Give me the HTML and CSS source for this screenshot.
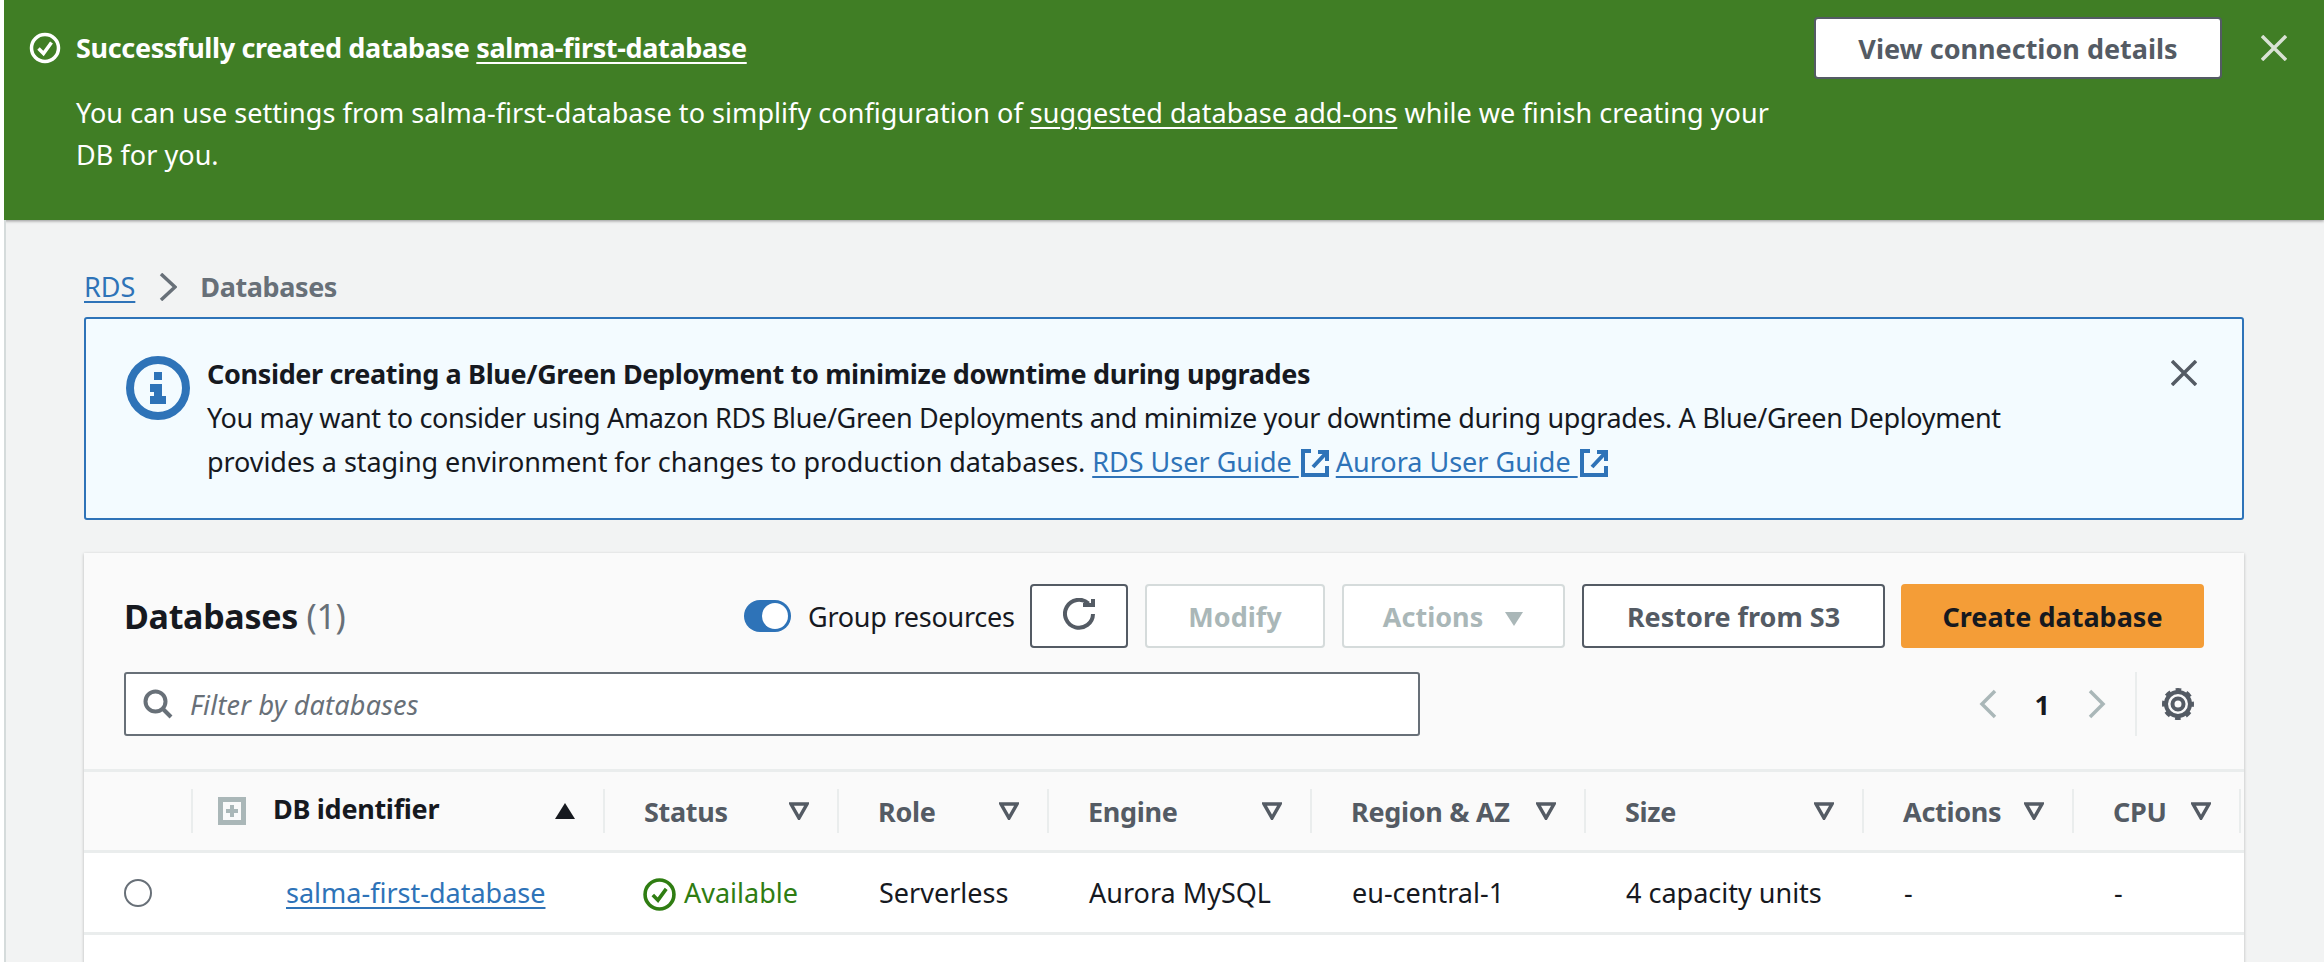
FILE: index.html
```html
<!DOCTYPE html>
<html lang="en">
  <head>
    <meta charset="UTF-8" />
    <meta name="viewport" content="width=device-width, initial-scale=1.0" />
    <title>RDS Databases</title>
    <link rel="stylesheet" href="styles.css">
  </head>
  <body>
    <div class="flash">
      <svg class="flash-icon" viewBox="0 0 32 32"><circle cx="16" cy="16" r="13.5"/><path d="M9.500 16.500l5 5 8-11"/></svg>
      <div class="flash-text">
        <div class="flash-title">Successfully created database <a href="#">salma-first-database</a></div>
        <p>You can use settings from salma-first-database to simplify configuration of <a href="#">suggested database add-ons</a> while we finish creating your DB for you.</p>
      </div>
      <button class="btn flash-btn">View connection details</button>
      <svg class="close close-light" viewBox="0 0 26 26"><path d="M1 1l24 24M25 1L1 25"/></svg>
    </div>

    <main class="content">
      <nav class="crumbs">
        <a href="#">RDS</a>
        <svg viewBox="0 0 18 28"><path d="M2 1l14 13L2 27"/></svg>
        <span>Databases</span>
      </nav>

      <div class="info">
        <svg class="info-icon" viewBox="0 0 64 64">
          <circle cx="32" cy="32" r="28" />
          <path class="info-i" d="M28 16h8v8h-8zM24 28h12v12h4v8H24v-8h4v-4h-4z"/>
        </svg>
        <div class="info-text">
          <strong>Consider creating a Blue/Green Deployment to minimize downtime during upgrades</strong>
          <p>You may want to consider using Amazon RDS Blue/Green Deployments and minimize your downtime during upgrades. A Blue/Green Deployment
            <span class="info-tail">provides a staging environment for changes to production databases.
            <a href="#">RDS User Guide <svg class="ext" viewBox="0 0 28 28"><path d="M10 2H2v24h24v-9M17 3h9v9M26 3L12 18"/></svg></a>
            <a href="#">Aurora User Guide <svg class="ext" viewBox="0 0 28 28"><path d="M10 2H2v24h24v-9M17 3h9v9M26 3L12 18"/></svg></a></span></p>
        </div>
        <svg class="close" viewBox="0 0 26 26"><path d="M1 1l24 24M25 1L1 25"/></svg>
      </div>

      <section class="card">
        <div class="card-head">
          <div class="toolbar">
            <h2>Databases <span>(1)</span></h2>
            <div class="toggle"><i></i></div>
            <label class="toggle-label">Group resources</label>
            <button class="btn btn-icon">
              <svg viewBox="0 0 32 32"><path d="M25.500 5.500A14 14 0 1 0 30 16M20 7h10V1"/></svg>
            </button>
            <button class="btn btn-modify" disabled>Modify</button>
            <button class="btn btn-actions" disabled>Actions <svg viewBox="0 0 20 16"><path d="M1 1h18L10 15z"/></svg></button>
            <button class="btn btn-restore">Restore from S3</button>
            <button class="btn btn-primary">Create database</button>
          </div>
          <div class="filter-row">
            <div class="filter">
              <svg viewBox="0 0 30 30"><circle cx="12.500" cy="12.500" r="10"/><path d="M20 20l8 8"/></svg>
              <span>Filter by databases</span>
            </div>
            <div class="pager">
              <svg viewBox="0 0 18 30"><path d="M16 2L3 15l13 13"/></svg>
              <b>1</b>
              <svg viewBox="0 0 18 30"><path d="M2 2l13 13L2 28"/></svg>
            </div>
            <div class="gear">
              <svg viewBox="0 0 34 34">
                <circle cx="17" cy="17" r="12"/>
                <circle class="gear-teeth" cx="17" cy="17" r="14.500"/>
                <circle cx="17" cy="17" r="5.500"/>
              </svg>
            </div>
          </div>
        </div>

        <table>
          <colgroup>
            <col class="c-radio"><col class="c-id"><col class="c-status"><col class="c-role"><col class="c-engine"><col class="c-region"><col class="c-size"><col class="c-actions"><col class="c-cpu"><col class="c-rest">
          </colgroup>
          <thead>
            <tr>
              <th></th>
              <th><div class="th id-th">
                <svg class="expand" viewBox="0 0 28 28"><rect x="2.500" y="2.500" width="23" height="23"/><path d="M14 8v12M8 14h12"/></svg>
                <span>DB identifier</span>
                <svg class="sort" viewBox="0 0 20 16"><path d="M10 0l10 16H0z"/></svg>
              </div></th>
              <th><div class="th"><span>Status</span><svg class="tri" viewBox="0 0 20 18"><path d="M2 2h16l-8 14z"/></svg></div></th>
              <th><div class="th"><span>Role</span><svg class="tri" viewBox="0 0 20 18"><path d="M2 2h16l-8 14z"/></svg></div></th>
              <th><div class="th"><span>Engine</span><svg class="tri" viewBox="0 0 20 18"><path d="M2 2h16l-8 14z"/></svg></div></th>
              <th><div class="th"><span>Region &amp; AZ</span><svg class="tri" viewBox="0 0 20 18"><path d="M2 2h16l-8 14z"/></svg></div></th>
              <th><div class="th"><span>Size</span><svg class="tri" viewBox="0 0 20 18"><path d="M2 2h16l-8 14z"/></svg></div></th>
              <th><div class="th"><span>Actions</span><svg class="tri" viewBox="0 0 20 18"><path d="M2 2h16l-8 14z"/></svg></div></th>
              <th><div class="th"><span>CPU</span><svg class="tri" viewBox="0 0 20 18"><path d="M2 2h16l-8 14z"/></svg></div></th>
              <th><div class="th"></div></th>
            </tr>
          </thead>
          <tbody>
            <tr>
              <td class="radio-cell"><i class="radio"></i></td>
              <td class="id-cell"><a href="#">salma-first-database</a></td>
              <td class="status"><svg viewBox="0 0 32 32"><circle cx="16" cy="16" r="14"/><path d="M9.500 16.500l5 5 8-11"/></svg>Available</td>
              <td>Serverless</td>
              <td>Aurora MySQL</td>
              <td>eu-central-1</td>
              <td>4 capacity units</td>
              <td>-</td>
              <td>-</td>
              <td></td>
            </tr>
          </tbody>
        </table>
      </section>
    </main>
  </body>
</html>
```
FILE: styles.css
```css
* {
  box-sizing: border-box;
}
html,
body {
  height: 100%;
}
body {
  margin: 0;
  overflow: hidden;
  background-color: #f2f3f3;
  border-left: 4px solid #fff;
  font-family: "Noto Sans", sans-serif;
  font-size: 27px;
  color: #16191f;
}
a {
  color: #2e73b8;
  text-decoration-thickness: 2px;
  text-underline-offset: 4px;
}
p {
  margin: 0;
}

.btn {
  height: 64px;
  border: 2px solid #545b64;
  border-radius: 4px;
  background-color: #fff;
  color: #545b64;
  font-family: inherit;
  font-size: 27px;
  font-weight: 700;
  padding: 0;
}

.close {
  width: 26px;
  height: 26px;
  flex: none;
  fill: none;
  stroke: #545b64;
  stroke-width: 3.500;
}
.close-light {
  stroke: #d9e2d4;
}

/* green banner */
.flash {
  display: flex;
  align-items: flex-start;
  height: 220px;
  padding: 17px 37px 0 25px;
  background-color: #407e25;
  color: #fff;
  box-shadow: 0 1px 3px rgba(0, 0, 0, 0.4);
}
.flash a {
  color: #fff;
}
.flash-icon {
  width: 32px;
  height: 32px;
  margin-top: 15px;
  flex: none;
  fill: none;
  stroke: #fff;
  stroke-width: 3.500;
}
.flash-text {
  width: 1717px;
  margin-left: 15px;
  line-height: 42px;
}
.flash-text p {
  letter-spacing: 0.05px;
}
.flash-title {
  margin-top: 10px;
  margin-bottom: 23px;
  font-weight: 700;
  letter-spacing: -0.35px;
}
.flash-btn {
  width: 408px;
  height: 62px;
  margin-left: 23px;
  flex: none;
}
.flash .close {
  margin-left: 39px;
  margin-top: 18px;
}

.content {
  padding: 0 80px 0 78px;
  border-left: 2px solid #d5dbdb;
}

.crumbs {
  display: flex;
  align-items: center;
  height: 97px;
  padding-top: 36px;
  line-height: 40px;
}
.crumbs svg {
  width: 18px;
  height: 28px;
  margin: 0 23px 0 24px;
  fill: none;
  stroke: #687078;
  stroke-width: 3.500;
}
.crumbs span {
  font-weight: 700;
  letter-spacing: -0.4px;
  color: #687078;
}

/* blue notice */
.info {
  display: flex;
  align-items: flex-start;
  height: 203px;
  padding: 33px 45px 0 40px;
  border: 2px solid #2e73b8;
  border-radius: 3px;
  background-color: #f3fbff;
  line-height: 44px;
}
.info-icon {
  width: 64px;
  height: 64px;
  margin-top: 4px;
  flex: none;
  fill: none;
  stroke: #2e73b8;
  stroke-width: 8;
}
.info-i {
  fill: #2e73b8;
  stroke: none;
}
.info-text {
  flex: 1;
  margin-left: 17px;
  letter-spacing: -0.35px;
}
.info-text strong {
  display: block;
}
.info-tail {
  letter-spacing: -0.07px;
}
.info-tail a {
  letter-spacing: 0;
}
.info .close {
  margin-top: 8px;
  margin-left: 100px;
}
.ext {
  width: 28px;
  height: 28px;
  margin-left: 2px;
  vertical-align: -5px;
  fill: none;
  stroke: #2e73b8;
  stroke-width: 4;
}

/* table card */
.card {
  margin-top: 33px;
  background-color: #fff;
  box-shadow: 0 1px 3px rgba(0, 0, 0, 0.25);
  min-height: 500px;
}
.card-head {
  height: 216px;
  padding: 31px 40px 0 40px;
  background-color: #fafafa;
}
.toolbar {
  display: flex;
  align-items: center;
  height: 64px;
}
.toolbar h2 {
  margin: 0;
  flex: 1;
  font-size: 34px;
  font-weight: 700;
  letter-spacing: -0.3px;
}
.toolbar h2 span {
  font-weight: 400;
  color: #687078;
}
.toggle {
  width: 47px;
  height: 32px;
  padding: 3px 3px 3px 18px;
  border-radius: 16px;
  background-color: #2e73b8;
}
.toggle i {
  display: block;
  width: 26px;
  height: 26px;
  border-radius: 50%;
  background-color: #fff;
}
.toggle-label {
  margin-left: 17px;
  width: 222px;
  letter-spacing: -0.25px;
}
.btn-icon {
  width: 98px;
}
.btn-icon svg {
  width: 32px;
  height: 32px;
  margin-top: 4px;
  fill: none;
  stroke: #545b64;
  stroke-width: 4;
}
.btn-modify,
.btn-actions {
  border-color: #d5dbdb;
  color: #aab7b8;
}
.btn-modify {
  width: 180px;
  margin-left: 17px;
}
.btn-actions {
  width: 223px;
  margin-left: 17px;
}
.btn-actions svg {
  width: 20px;
  height: 16px;
  margin-left: 14px;
  fill: #aab7b8;
}
.btn-restore {
  width: 303px;
  margin-left: 17px;
}
.btn-primary {
  width: 303px;
  margin-left: 16px;
  border-color: #f49d37;
  background-color: #f49d37;
  color: #16191f;
}

.filter-row {
  display: flex;
  align-items: center;
  height: 64px;
  margin-top: 24px;
}
.filter {
  display: flex;
  align-items: center;
  width: 1296px;
  height: 64px;
  padding-left: 17px;
  border: 2px solid #687078;
  border-radius: 3px;
  background-color: #fff;
  color: #687078;
  font-style: italic;
  letter-spacing: 0.2px;
}
.filter svg {
  width: 30px;
  height: 30px;
  margin-right: 17px;
  fill: none;
  stroke: #687078;
  stroke-width: 4;
}
.pager {
  display: flex;
  align-items: center;
  margin-left: auto;
  margin-right: 29px;
  gap: 38px;
}
.pager svg {
  width: 18px;
  height: 30px;
  fill: none;
  stroke: #aab7b8;
  stroke-width: 3.500;
}
.pager b {
  font-weight: 700;
}
.gear {
  display: flex;
  align-items: center;
  height: 64px;
  padding: 0 9px 0 24px;
  border-left: 2px solid #eaeded;
}
.gear svg {
  width: 34px;
  height: 34px;
  fill: none;
  stroke: #545b64;
  stroke-width: 4;
}
.gear-teeth {
  stroke-width: 3;
  stroke-dasharray: 5.700 5.690;
  stroke-dashoffset: 2.850;
}

table {
  width: 100%;
  border-collapse: collapse;
  table-layout: fixed;
}
.c-radio { width: 107px; }
.c-id { width: 412px; }
.c-status { width: 234px; }
.c-role { width: 210px; }
.c-engine { width: 263px; }
.c-region { width: 274px; }
.c-size { width: 278px; }
.c-actions { width: 210px; }
.c-cpu { width: 167px; }
th {
  height: 81px;
  padding: 0;
  border-top: 3px solid #eaeded;
  border-bottom: 3px solid #eaeded;
  background-color: #fafafa;
  color: #545b64;
  font-weight: 700;
  letter-spacing: -0.3px;
  text-align: left;
}
.th {
  display: flex;
  align-items: center;
  justify-content: space-between;
  height: 44px;
  padding: 0 28px 0 39px;
  border-left: 2px solid #eaeded;
}
.id-th {
  justify-content: flex-start;
  padding: 0 28px 0 25px;
  color: #16191f;
}
.id-th span {
  margin-bottom: 5px;
}
.expand {
  width: 28px;
  height: 28px;
  margin-right: 27px;
  fill: #fafafa;
  stroke: #aab7b8;
  stroke-width: 5;
}
.expand path {
  stroke-width: 4;
}
.sort {
  width: 20px;
  height: 16px;
  margin-left: auto;
  fill: #16191f;
}
.tri {
  width: 20px;
  height: 18px;
  flex: none;
  fill: none;
  stroke: #545b64;
  stroke-width: 3.500;
}
td {
  height: 82px;
  padding: 0 0 0 42px;
  border-bottom: 3px solid #eaeded;
  white-space: nowrap;
}
.radio-cell {
  padding-left: 40px;
}
.radio {
  display: block;
  width: 28px;
  height: 28px;
  border: 2px solid #687078;
  border-radius: 50%;
}
.id-cell {
  padding-left: 95px;
}
td.status {
  padding-left: 40px;
  color: #2f7d12;
}
.status svg {
  width: 33px;
  height: 33px;
  margin-right: 8px;
  vertical-align: -8px;
  fill: none;
  stroke: #2f7d12;
  stroke-width: 3.500;
}
```
